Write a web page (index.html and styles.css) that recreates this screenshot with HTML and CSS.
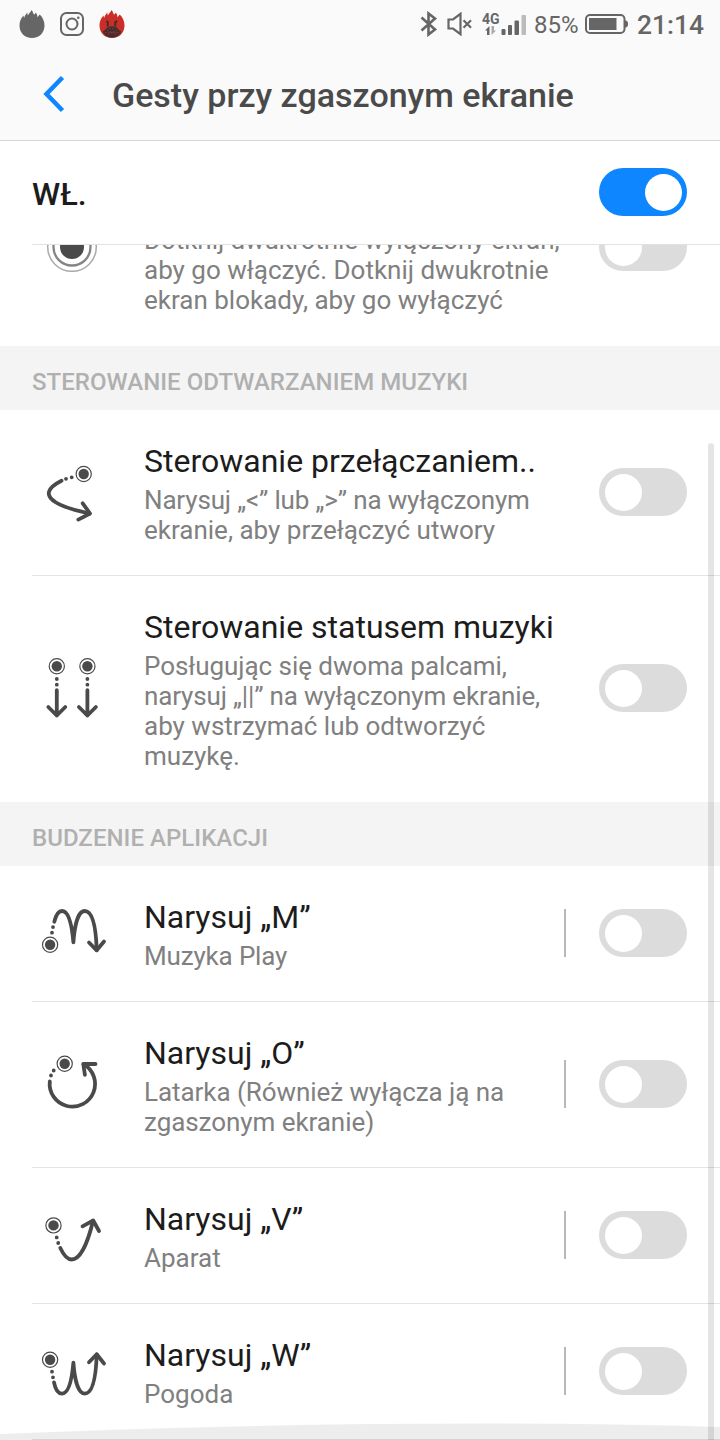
FILE: index.html
```html
<!DOCTYPE html>
<html lang="pl">
<head>
  <meta charset="UTF-8">
  <meta name="viewport" content="width=device-width, initial-scale=1.0">
  <title>Gesty przy zgaszonym ekranie</title>
  <link rel="stylesheet" href="styles.css">
</head>
<body>
  <svg class="symbols" width="0" height="0">
    <symbol id="flame" viewBox="0 0 26 28">
      <path d="M13 28C5.500 28 .5 22.500 .5 15.500C.5 11.500 2 8 4.600 5.500L5 8.300C5.800 6 6.900 4.200 8.300 2.600L8.700 5.500L12.800 0L15 4.800L16.800 2.800C18 4 18.400 5.600 18.500 7.200L20.700 4.600C23.800 7.400 25.500 11.500 25.500 15.500C25.500 22.500 20.500 28 13 28Z"/>
    </symbol>
    <symbol id="finger" viewBox="-9 -9 18 18">
      <circle r="7.600" fill="none" stroke="#4a4a4a" stroke-width="1.200"/>
      <circle r="5.200" fill="#4a4a4a" stroke="none"/>
    </symbol>
  </svg>

  <header>
    <div class="status-bar">
      <div class="notifications">
        <svg class="flame" width="26" height="28"><use href="#flame"/></svg>
        <svg width="24" height="24" viewBox="0 0 24 24" fill="none" stroke="#666" stroke-width="2">
          <rect x="1" y="1" width="22" height="22" rx="5.500"/>
          <circle cx="12" cy="12" r="5.500"/>
          <circle cx="18.300" cy="5.800" r="1.300" fill="#666" stroke="none"/>
        </svg>
        <svg class="flame red" width="26" height="28" viewBox="0 0 26 28">
          <use href="#flame"/>
          <path d="M3.500 21.500C6 21 7 17.500 10 17C12 16 14.500 16 16 17C19 17.500 20 21 22.500 21.500C20 26 17 27.600 13 27.600C9 27.600 6 26 3.500 21.500Z" fill="#3c3030"/>
          <path d="M7.300 11L8.800 12V16.500M18.200 11L16.300 12V16.500" fill="none" stroke="#3c3030" stroke-width="2"/>
          <path d="M6 22.500H20M8 20L18 25M18 20L8 25M10 18.500H16" fill="none" stroke="#b52b26" stroke-width=".9" stroke-dasharray="1.500 1.500"/>
        </svg>
      </div>
      <div class="system">
        <svg class="bluetooth" width="18" height="26" viewBox="0 0 18 26" fill="none" stroke="#666" stroke-width="2.600">
          <path d="M1.500 6.500L15 18.500L8.500 23.500V2.500L15 7.500L1.500 19.500"/>
        </svg>
        <svg class="mute" width="26" height="24" viewBox="0 0 26 24" fill="none" stroke="#666" stroke-width="2.200">
          <path d="M1.500 7.500H6L13.500 1.800V22.200L6 16.500H1.500Z"/>
          <path d="M16.500 8.300L24 15.700M24 8.300L16.500 15.700"/>
        </svg>
        <svg class="signal" width="45" height="24" viewBox="0 0 45 24">
          <text x="0" y="11.500">4G</text>
          <path d="M3 18.500L7.500 14V23H5V18.500Z" fill="#666"/>
          <path d="M9.500 14V23L14 18.500H12V14Z" fill="#aaa"/>
          <rect x="19.500" y="17" width="4" height="6" rx="1" fill="#666"/>
          <rect x="26" y="13" width="4" height="10" rx="1" fill="#666"/>
          <rect x="32.500" y="8.500" width="4.500" height="14.500" rx="1" fill="#666"/>
          <rect x="39.500" y="3" width="4.500" height="20" rx="1" fill="#bbb"/>
        </svg>
        <span class="percent">85%</span>
        <svg class="battery" width="44" height="20" viewBox="0 0 44 20">
          <rect x="1" y="1" width="38.500" height="18" rx="4" fill="none" stroke="#666" stroke-width="2"/>
          <rect x="4" y="4" width="27.500" height="12" fill="#666"/>
          <path d="M40 6.500C42.500 6.500 43 8 43 10C43 12 42.500 13.500 40 13.500Z" fill="#666"/>
        </svg>
        <span class="clock">21:14</span>
      </div>
    </div>
    <div class="title-bar">
      <svg class="back" width="24" height="40" viewBox="0 0 24 40">
        <path d="M21.500 3.500L5.500 20L21.500 36.500" fill="none" stroke="#0d86ff" stroke-width="4.500"/>
      </svg>
      <h1>Gesty przy zgaszonym ekranie</h1>
    </div>
  </header>

  <div class="master">
    <span>WŁ.</span>
    <div class="toggle on"></div>
  </div>

  <main>
    <div class="list">
      <div class="item first last">
        <svg class="gesture" viewBox="0 0 64 64">
          <circle cx="32" cy="32" r="24.300" stroke="#aaa" stroke-width="1.500"/>
          <circle cx="32" cy="32" r="18.500" stroke="#858585" stroke-width="2.300"/>
          <circle cx="32" cy="32" r="12" fill="#4a4a4a" stroke="none"/>
        </svg>
        <div class="text">
          <p><span class="tight">Dotknij dwukrotnie wyłączony ekran,</span><br>aby go włączyć. Dotknij dwukrotnie<br>ekran blokady, aby go wyłączyć</p>
        </div>
        <div class="toggle"></div>
      </div>

      <h3>STEROWANIE ODTWARZANIEM MUZYKI</h3>
      <div class="item">
        <svg class="gesture" viewBox="0 0 64 64">
          <use href="#finger" x="34.700" y="5" width="18" height="18"/>
          <path class="dots" d="M31.700 17.300h.01M26 18.800h.01"/>
          <path d="M21.500 20.700C7 28 4.500 35.500 16 42.500C24 47.500 36 50.500 49.500 53.500"/>
          <path d="M42.700 43.300L50 53.500L38.300 59.600"/>
        </svg>
        <div class="text">
          <h2>Sterowanie przełączaniem..</h2>
          <p><span class="tighter">Narysuj „&lt;” lub „&gt;” na wyłączonym</span><br>ekranie, aby przełączyć utwory</p>
        </div>
        <div class="toggle"></div>
      </div>
      <div class="item last">
        <svg class="gesture" viewBox="0 0 64 64">
          <use href="#finger" x="7.800" y="1.300" width="18" height="18"/>
          <use href="#finger" x="38.400" y="1.300" width="18" height="18"/>
          <path class="dots" d="M16.800 23h.01M16.800 28.700h.01M47.400 23h.01M47.400 28.700h.01"/>
          <path d="M16.800 34.200V59.500M8.300 51L16.800 59.500L25.300 51"/>
          <path d="M47.400 34.200V59.500M38.900 51L47.400 59.500L55.900 51"/>
        </svg>
        <div class="text">
          <h2>Sterowanie statusem muzyki</h2>
          <p><span class="tight">Posługując się dwoma palcami,</span><br><span class="tighter">narysuj „||” na wyłączonym ekranie,</span><br>aby wstrzymać lub odtworzyć<br>muzykę.</p>
        </div>
        <div class="toggle"></div>
      </div>

      <h3>BUDZENIE APLIKACJI</h3>
      <div class="item">
        <svg class="gesture" viewBox="0 0 64 64">
          <use href="#finger" x="1.100" y="34.700" width="18" height="18"/>
          <path class="dots" d="M12 31.700h.01M13 26.100h.01"/>
          <path d="M14.300 20.700C16 14 18.500 10 22 10C29 10 32 25 33.400 41.300C34.500 25 38 10 44.700 10C53 10 56 27 56.700 49"/>
          <path d="M49 41.500L56.700 49.300L64 40.500"/>
        </svg>
        <div class="text">
          <h2>Narysuj „M”</h2>
          <p class="tighter">Muzyka Play</p>
        </div>
        <div class="separator"></div>
        <div class="toggle"></div>
      </div>
      <div class="item">
        <svg class="gesture" viewBox="0 0 64 64">
          <use href="#finger" x="15.700" y="2.700" width="18" height="18"/>
          <path class="dots" d="M13.700 18.500h.01M11 23.500h.01"/>
          <path d="M9.800 29.500A22.700 22.700 0 1 0 43.500 12.200"/>
          <path d="M55.500 12H43.300L44.900 22.800"/>
        </svg>
        <div class="text">
          <h2>Narysuj „O”</h2>
          <p class="tight">Latarka (Również wyłącza ją na<br>zgaszonym ekranie)</p>
        </div>
        <div class="separator"></div>
        <div class="toggle"></div>
      </div>
      <div class="item">
        <svg class="gesture" viewBox="0 0 64 64">
          <use href="#finger" x="4.500" y="13.400" width="18" height="18"/>
          <path class="dots" d="M16.700 34.400h.01M18.200 40h.01"/>
          <path d="M20.300 45C24 53 27.500 56.500 31.700 56.500C40 56.500 47.500 41 53 18"/>
          <path d="M42.500 23.300L53.200 17.500L59 28"/>
        </svg>
        <div class="text">
          <h2>Narysuj „V”</h2>
          <p>Aparat</p>
        </div>
        <div class="separator"></div>
        <div class="toggle"></div>
      </div>
      <div class="item">
        <svg class="gesture" viewBox="0 0 64 64">
          <use href="#finger" x="1.100" y="11.700" width="18" height="18"/>
          <path class="dots" d="M12 32.700h.01M13 38.300h.01"/>
          <path d="M14 43.300C15.500 51 18.500 54.600 22 54.600C29 54.600 32 40 33.400 23.700C34.500 40 38 54.600 44.700 54.600C53 54.600 56 38 56.700 15.500"/>
          <path d="M49 23.300L56.700 15.300L64 24.500"/>
        </svg>
        <div class="text">
          <h2>Narysuj „W”</h2>
          <p>Pogoda</p>
        </div>
        <div class="separator"></div>
        <div class="toggle"></div>
      </div>
    </div>

    <div class="scrollbar"></div>
    <svg class="overscroll" width="720" height="17" viewBox="0 0 720 17">
      <path d="M0 11Q400 -5.500 720 4V17H0Z"/>
    </svg>
  </main>
</body>
</html>
```

FILE: styles.css
```css
* {
  box-sizing: border-box;
}

body {
  margin: 0;
  width: 720px;
  height: 1440px;
  overflow: hidden;
  display: flex;
  flex-direction: column;
  background: #fff;
  font-family: Roboto, "Noto Sans", sans-serif;
  color: #1c1c1c;
}

h1, h2, h3, p {
  margin: 0;
}

svg {
  display: block;
  flex: none;
}

.symbols {
  position: absolute;
}

/* top bars */
header {
  height: 141px;
  background: #fafafa;
  border-bottom: 1px solid #d8d8d8;
  flex: none;
}

.status-bar {
  height: 50px;
  padding: 0 16px 0 19px;
  display: flex;
  justify-content: space-between;
  align-items: center;
  color: #666;
}

.notifications, .system {
  display: flex;
  align-items: center;
}

.notifications {
  gap: 15px;
  margin-bottom: 2px;
}

.flame {
  fill: #666;
}

.red {
  fill: #cb2d27;
}

.bluetooth {
  margin-right: 9px;
  margin-bottom: 2px;
}

.mute {
  margin-right: 9px;
  margin-bottom: 2px;
}

.signal {
  margin-right: 7px;
  margin-bottom: 2px;
}

.signal text {
  font-size: 14px;
  font-weight: 700;
  fill: #666;
}

.percent {
  width: 44px;
  margin-right: 7px;
  font-size: 24px;
}

.battery {
  margin-right: 8px;
  margin-bottom: 2px;
}

.clock {
  width: 67px;
  font-size: 26.4px;
  font-weight: 500;
}

.title-bar {
  height: 90px;
  padding-left: 41px;
  display: flex;
  align-items: center;
}

.back {
  margin-right: 47px;
  margin-bottom: 2px;
}

h1 {
  font-size: 34px;
  font-weight: 500;
  color: #4a4a4a;
  white-space: nowrap;
}

.master {
  height: 104px;
  margin-left: 32px;
  padding: 0 33px 0 0;
  display: flex;
  justify-content: space-between;
  align-items: center;
  border-bottom: 1px solid #e2e2e2;
  font-size: 32px;
  font-weight: 500;
  flex: none;
}

.master span {
  padding-top: 2px;
}

/* scrolled list */
main {
  position: relative;
  flex: 1;
  min-height: 0;
  overflow: hidden;
}

.list {
  margin-top: -95px;
}

.item {
  margin-left: 32px;
  padding: 32px 33px 30px 8px;
  display: flex;
  align-items: center;
  border-bottom: 1px solid #e4e4e4;
}

.first .text {
  padding-top: 43px;
}

.last {
  border-bottom-color: transparent;
}

.gesture {
  width: 64px;
  height: 64px;
  margin-right: 40px;
  margin-bottom: 3px;
  overflow: visible;
  fill: none;
  stroke: #4a4a4a;
  stroke-width: 3.8;
  stroke-linecap: round;
  stroke-linejoin: round;
}

.text {
  flex: 1;
  white-space: nowrap;
}

h2 {
  margin-bottom: 5px;
  font-size: 32px;
  font-weight: 400;
  line-height: 38px;
}

p {
  font-size: 26px;
  line-height: 30px;
  color: #808080;
}

.tight {
  letter-spacing: -0.06px;
}

.tighter {
  letter-spacing: -0.16px;
}

h3 {
  height: 64px;
  padding: 4px 32px 0;
  background: #f4f4f4;
  color: #b0b0b0;
  font-size: 24px;
  font-weight: 500;
  line-height: 64px;
  letter-spacing: 0.04px;
}

.separator {
  width: 2px;
  height: 48px;
  margin: 0 33px 3px 0;
  background: #b8b8b8;
}

.toggle {
  width: 88px;
  height: 48px;
  padding: 5.5px;
  border-radius: 24px;
  background: #dcdcdc;
  flex: none;
}

.item .toggle {
  margin-bottom: 3px;
}

.toggle::before {
  content: "";
  display: block;
  width: 37px;
  height: 37px;
  border-radius: 50%;
  background: #fff;
}

.on {
  margin-bottom: 1px;
  background: #0d86ff;
}

.on::before {
  margin-left: 40px;
}

.scrollbar {
  position: absolute;
  top: 198px;
  right: 6px;
  bottom: 0;
  width: 6px;
  border-radius: 3px 3px 0 0;
  background: rgba(0, 0, 0, 0.1);
}

.overscroll {
  position: absolute;
  left: 0;
  bottom: 0;
  fill: rgba(0, 0, 0, 0.07);
}
```
